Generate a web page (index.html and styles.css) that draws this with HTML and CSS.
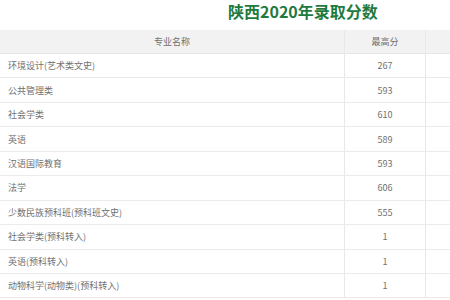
FILE: index.html
```html
<!DOCTYPE html>
<html lang="zh">
<head>
<meta charset="utf-8">
<link rel="stylesheet" href="styles.css">
</head>
<body>
<div class="page">
  <h1 class="title">陕西2020年录取分数</h1>
  <div class="table">
    <div class="row head"><div class="c name">专业名称</div><div class="c score">最高分</div><div class="c extra"></div></div>
    <div class="row"><div class="c name">环境设计(艺术类文史)</div><div class="c score">267</div><div class="c extra"></div></div>
    <div class="row"><div class="c name">公共管理类</div><div class="c score">593</div><div class="c extra"></div></div>
    <div class="row"><div class="c name">社会学类</div><div class="c score">610</div><div class="c extra"></div></div>
    <div class="row"><div class="c name">英语</div><div class="c score">589</div><div class="c extra"></div></div>
    <div class="row"><div class="c name">汉语国际教育</div><div class="c score">593</div><div class="c extra"></div></div>
    <div class="row"><div class="c name">法学</div><div class="c score">606</div><div class="c extra"></div></div>
    <div class="row"><div class="c name">少数民族预科班(预科班文史)</div><div class="c score">555</div><div class="c extra"></div></div>
    <div class="row"><div class="c name">社会学类(预科转入)</div><div class="c score">1</div><div class="c extra"></div></div>
    <div class="row"><div class="c name">英语(预科转入)</div><div class="c score">1</div><div class="c extra"></div></div>
    <div class="row"><div class="c name">动物科学(动物类)(预科转入)</div><div class="c score">1</div><div class="c extra"></div></div>
  </div>
</div>
</body>
</html>
```

FILE: styles.css
```css
html, body { margin: 0; padding: 0; background: #fff; }
body { width: 450px; height: 300px; overflow: hidden; font-family: "Noto Sans CJK SC", "Noto Sans", sans-serif; }
.page { width: 450px; overflow: hidden; }
.title {
  margin: 0;
  padding: 0 0 0 228px;
  height: 30px;
  font-size: 16px;
  line-height: 22px;
  font-weight: 700;
  color: #1f7a3e;
}
.table { display: flex; flex-direction: column; }
.row {
  display: grid;
  grid-template-columns: 345px 81px 1fr;
  height: 24.45px;
  box-sizing: border-box;
  border-bottom: 1px solid #ebebeb;
  font-size: 9px;
  color: #707070;
}
.row.head { background: #f2f2f2; border-bottom: 1px solid #e6e6e6; height: 24px; }
.c { display: flex; align-items: center; }
.name { padding-left: 8px; border-right: 1px solid #e8e8e8; }
.head .name { justify-content: center; padding-left: 0; }
.score { justify-content: center; border-right: 1px solid #e8e8e8; }
```
